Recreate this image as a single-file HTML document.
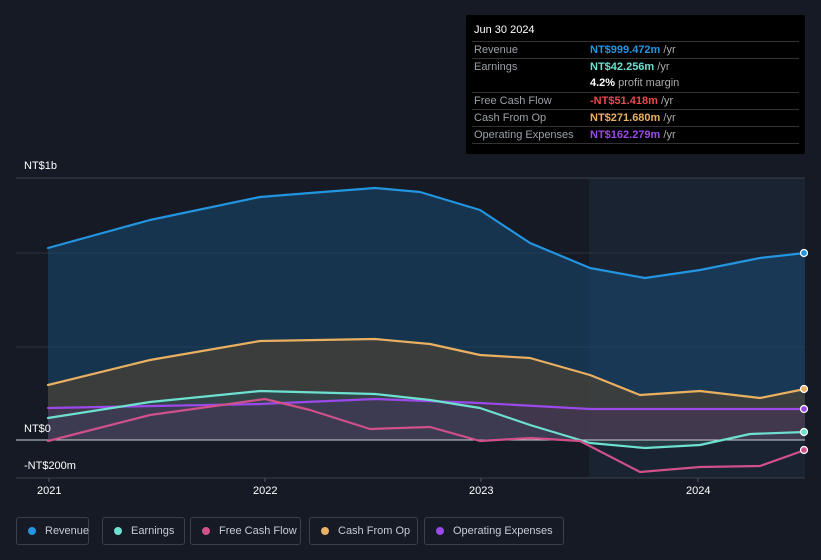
<!DOCTYPE html><html><head><style>
body{margin:0;background:#151a24;font-family:"Liberation Sans",sans-serif;}
.wrap{position:relative;width:821px;height:560px;overflow:hidden;background:#151a24}
.tip{position:absolute;left:466px;top:15px;width:339px;height:139px;background:#000;border-radius:2px;font-size:11px;color:#9aa0a8}
.tip .h{position:absolute;left:8px;top:9px;color:#fff;font-size:11px}
.row{position:absolute;left:6px;width:327px;height:17px;border-top:1px solid #333;line-height:17px}
.row span.l{position:absolute;left:2px}
.row span.v{position:absolute;left:118px;font-weight:bold}
.row i{font-style:normal;color:#aaa;font-weight:normal}
.leg{position:absolute;top:517px;height:28px;border:1px solid #3a404a;border-radius:3px;color:#c8ccd2;font-size:11px;line-height:26px;box-sizing:border-box;white-space:nowrap}
.leg b{position:absolute;left:11px;top:9px;width:8px;height:8px;border-radius:50%}
.leg span{position:absolute;left:28px;top:0}
.ax{position:absolute;color:#fff;font-size:11px}
</style></head><body><div class="wrap">
<svg width="821" height="560" style="position:absolute;left:0;top:0">
<rect x="589" y="178" width="216" height="300" fill="#1c2535" opacity="0.8"/>
<line x1="16" y1="178" x2="805" y2="178" stroke="#3a404a"/>
<line x1="16" y1="253" x2="805" y2="253" stroke="#2a303a"/>
<line x1="16" y1="347" x2="805" y2="347" stroke="#2a303a"/>
<line x1="16" y1="478" x2="805" y2="478" stroke="#3a404a"/>
<polygon fill="#1a4a72" opacity="0.55" points="48,440 48,248 150,220 260,197 310,193 375,188 420,192 480,210 530,243 590,268 645,278 700,270 760,258 805,253 805,440"/>
<polygon fill="#4a4235" opacity="0.7" points="48,440 48,385 150,360 260,341 375,339 430,344 480,355 530,358 590,375 640,395 700,391 760,398 805,389 805,440"/>
<polygon fill="#2e4a50" opacity="0.6" points="48,440 48,418 150,402 260,391 375,394 430,400 480,408 530,425 590,443 645,448 700,445 750,434 805,432 805,440"/>
<polygon fill="#4a3060" opacity="0.45" points="48,440 48,408 260,404 375,399 480,403 590,409 700,409 805,409 805,440"/>
<line x1="16" y1="440" x2="805" y2="440" stroke="#cfd3d8" stroke-width="1"/>
<g fill="none" stroke-width="2.2" stroke-linejoin="round" stroke-linecap="round">
<polyline stroke="#2394df" points="48,248 150,220 260,197 310,193 375,188 420,192 480,210 530,243 590,268 645,278 700,270 760,258 805,253"/>
<polyline stroke="#e8b060" points="48,385 150,360 260,341 375,339 430,344 480,355 530,358 590,375 640,395 700,391 760,398 805,389"/>
<polyline stroke="#9b49e8" points="48,408 260,404 375,399 480,403 590,409 700,409 805,409"/>
<polyline stroke="#6ee0d0" points="48,418 150,402 260,391 375,394 430,400 480,408 530,425 590,443 645,448 700,445 750,434 805,432"/>
<polyline stroke="#d0508a" points="48,441 150,415 265,399 310,410 370,429 430,427 480,441 530,438 580,441 640,472 700,467 760,466 805,450"/>
</g>
<g stroke="#fff" stroke-width="1.2">
<circle cx="804" cy="253" r="3.5" fill="#2394df"/><circle cx="804" cy="389" r="3.5" fill="#e8b060"/>
<circle cx="804" cy="409" r="3.5" fill="#9b49e8"/><circle cx="804" cy="432" r="3.5" fill="#6ee0d0"/>
<circle cx="804" cy="450" r="3.5" fill="#d0508a"/></g>
<g stroke="#555"><line x1="49" y1="478" x2="49" y2="482"/><line x1="265" y1="478" x2="265" y2="482"/><line x1="481" y1="478" x2="481" y2="482"/><line x1="698" y1="478" x2="698" y2="482"/></g>
</svg>
<div class="ax" style="left:24px;top:160px">NT$1b</div>
<div class="ax" style="left:24px;top:423px">NT$0</div>
<div class="ax" style="left:24px;top:460px">-NT$200m</div>
<div class="ax" style="left:37px;top:485px">2021</div>
<div class="ax" style="left:253px;top:485px">2022</div>
<div class="ax" style="left:469px;top:485px">2023</div>
<div class="ax" style="left:686px;top:485px">2024</div>
<div class="tip"><div class="h">Jun 30 2024</div>
<div class="row" style="top:26px"><span class="l">Revenue</span><span class="v" style="color:#2394df">NT$999.472m <i>/yr</i></span></div>
<div class="row" style="top:43px"><span class="l">Earnings</span><span class="v" style="color:#6ee0d0">NT$42.256m <i>/yr</i></span></div>
<div class="row" style="top:60px;border-top:none"><span class="v" style="color:#fff">4.2% <i>profit margin</i></span></div>
<div class="row" style="top:77px"><span class="l">Free Cash Flow</span><span class="v" style="color:#e84a4a">-NT$51.418m <i>/yr</i></span></div>
<div class="row" style="top:94px"><span class="l">Cash From Op</span><span class="v" style="color:#e8b060">NT$271.680m <i>/yr</i></span></div>
<div class="row" style="top:111px"><span class="l">Operating Expenses</span><span class="v" style="color:#9b49e8">NT$162.279m <i>/yr</i></span></div>
<div class="row" style="top:128px;height:0"></div>
</div>
<div class="leg" style="left:16px;width:73px"><b style="background:#2394df"></b><span>Revenue</span></div>
<div class="leg" style="left:102px;width:83px"><b style="background:#6ee0d0"></b><span>Earnings</span></div>
<div class="leg" style="left:190px;width:111px"><b style="background:#d0508a"></b><span>Free Cash Flow</span></div>
<div class="leg" style="left:309px;width:109px"><b style="background:#e8b060"></b><span>Cash From Op</span></div>
<div class="leg" style="left:424px;width:140px"><b style="background:#9b49e8"></b><span>Operating Expenses</span></div>
</div></body></html>
